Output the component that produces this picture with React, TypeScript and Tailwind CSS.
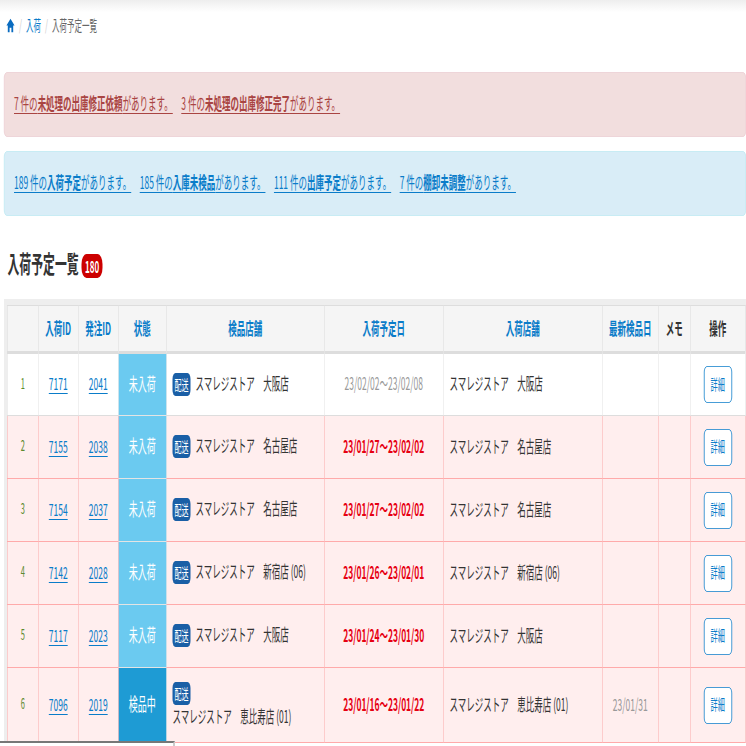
const font = { fontFamily: '"Noto Sans CJK JP", "Liberation Sans", sans-serif' };

const Badge = () => (
  <span className="inline-block rounded-[6px] bg-[#1a5fa6] px-[4px] py-[3px] text-[14px] leading-[17px] text-white">配送</span>
);

type Row = {
  n: number; id: string; po: string; status: string; insp: string; date: string; recv: string; last?: string; wrap?: boolean; late: boolean;
};

const rows: Row[] = [
  { n: 1, id: "7171", po: "2041", status: "未入荷", insp: "スマレジストア　大阪店", date: "23/02/02～23/02/08", recv: "スマレジストア　大阪店", late: false },
  { n: 2, id: "7155", po: "2038", status: "未入荷", insp: "スマレジストア　名古屋店", date: "23/01/27～23/02/02", recv: "スマレジストア　名古屋店", late: true },
  { n: 3, id: "7154", po: "2037", status: "未入荷", insp: "スマレジストア　名古屋店", date: "23/01/27～23/02/02", recv: "スマレジストア　名古屋店", late: true },
  { n: 4, id: "7142", po: "2028", status: "未入荷", insp: "スマレジストア　新宿店 (06)", date: "23/01/26～23/02/01", recv: "スマレジストア　新宿店 (06)", late: true },
  { n: 5, id: "7117", po: "2023", status: "未入荷", insp: "スマレジストア　大阪店", date: "23/01/24～23/01/30", recv: "スマレジストア　大阪店", late: true },
  { n: 6, id: "7096", po: "2019", status: "検品中", insp: "スマレジストア　恵比寿店 (01)", date: "23/01/16～23/01/22", recv: "スマレジストア　恵比寿店 (01)", last: "23/01/31", wrap: true, late: true },
];

const Alert = ({ tone, items }: { tone: "red" | "blue"; items: [string, string, string][] }) => (
  <div className={tone === "red"
    ? "flex h-[65px] items-center rounded-[6px] border border-[#ebccd1] bg-[#f2dede] px-[19px] pb-[3px] text-[#a94442]"
    : "flex h-[65px] items-center rounded-[6px] border border-[#bce8f1] bg-[#d9edf7] px-[19px] pb-[3px] text-[#0a7cc9]"}>
    <div className="flex gap-[17px] text-[17px] leading-[20px]">
      {items.map(([a, b, c]) => (
        <a key={b} className="underline underline-offset-[3px]">{a}<b>{b}</b>{c}</a>
      ))}
    </div>
  </div>
);

const Th = ({ children, dark }: { children?: string; dark?: boolean }) => (
  <th className={dark
    ? "border border-b-[3px] border-[#dddddd] bg-[#f5f5f5] pb-[2px] text-center text-[17px] font-bold text-[#333333]"
    : "border border-b-[3px] border-[#dddddd] bg-[#f5f5f5] pb-[2px] text-center text-[17px] font-bold text-[#0a7cc9]"}>{children}</th>
);

const Tr = ({ r }: { r: Row }) => {
  const c = r.late ? "border border-[#ffaaaa] align-middle" : "border border-[#e4e4e4] border-b-[#dddddd] align-middle";
  return (
    <tr className={r.late ? (r.wrap ? "h-[75px] bg-[#ffeeee]" : "h-[63px] bg-[#ffeeee]") : "h-[63px] bg-white"}>
      <td className={`${c} pb-[3px] text-center text-[15px] text-[#5c8a2e]`}>{r.n}</td>
      <td className={`${c} pb-[3px] text-center text-[#0a7cc9] underline underline-offset-[3px]`}>{r.id}</td>
      <td className={`${c} pb-[3px] text-center text-[#0a7cc9] underline underline-offset-[3px]`}>{r.po}</td>
      <td className={r.status === "未入荷"
        ? "border border-[#e4e4e4] bg-[#6bcaf0] pb-[3px] text-center text-[18px] text-white"
        : "border border-[#e4e4e4] bg-[#1e9bd4] pb-[3px] text-center text-[18px] text-white"}>{r.status}</td>
      <td className={`${c} px-[12px] pb-[1px] text-[#333333]`}>
        {r.wrap ? (
          <div className="flex flex-col items-start"><Badge /><span className="leading-[22px]">{r.insp}</span></div>
        ) : (
          <div className="flex items-center gap-[10px]"><Badge /><span className="pb-[3px]">{r.insp}</span></div>
        )}
      </td>
      <td className={r.late ? `${c} pb-[3px] text-center font-bold tracking-[-0.1px] text-[#e60012]` : `${c} pb-[3px] text-center text-[#999999]`}>{r.date}</td>
      <td className={`${c} px-[12px] pb-[3px] text-[#333333]`}>{r.recv}</td>
      <td className={`${c} pb-[3px] text-center text-[#999999]`}>{r.last}</td>
      <td className={c}></td>
      <td className={`${c} text-center`}>
        <button className="h-[37px] w-[56px] rounded-[6px] border border-[#0a7cc9] bg-white pb-[2px] text-[14.4px] text-[#0a7cc9]">詳細</button>
      </td>
    </tr>
  );
};

export default function App() {
  return (
    <div className="relative h-[746px] w-[746px] overflow-hidden bg-white" style={font}>
      <div className="w-[1492px] origin-top-left scale-x-[0.5] text-[17px] text-[#333333]">
        <div className="h-[12px] bg-gradient-to-b from-[#eeeeee] to-white" />
        <div className="flex h-[30px] items-center gap-[8px] pb-[3px] pl-[12px] text-[15px] text-[#666666]">
          <svg viewBox="0 0 20 20" preserveAspectRatio="none" className="h-[15px] w-[18px] fill-[#0a6cc0]">
            <path d="M10 1 1 10h3v9h4v-6h4v6h4v-9h3z" />
          </svg>
          <span className="text-[#cccccc]">/</span>
          <span className="text-[#0a7cc9]">入荷</span>
          <span className="text-[#cccccc]">/</span>
          <span>入荷予定一覧</span>
        </div>
        <div className="ml-[8px] mt-[30px] flex flex-col gap-[14px]">
          <Alert tone="red" items={[
            ["7 件の", "未処理の出庫修正依頼", "があります。"],
            ["3 件の", "未処理の出庫修正完了", "があります。"],
          ]} />
          <Alert tone="blue" items={[
            ["189 件の", "入荷予定", "があります。"],
            ["185 件の", "入庫未検品", "があります。"],
            ["111 件の", "出庫予定", "があります。"],
            ["7 件の", "棚卸未調整", "があります。"],
          ]} />
        </div>
        <div className="mt-[33px] flex items-center gap-[6px] pl-[15px]">
          <h2 className="pb-[2px] text-[23.7px] font-bold leading-[26px] text-[#333333]">入荷予定一覧</h2>
          <span className="mt-[5px] rounded-[10px] bg-[#cc0000] px-[7px] text-[16px] font-bold leading-[24px] text-white">180</span>
        </div>
        <div className="ml-[8px] mt-[21px] bg-[#eeeeee] pl-[6px] pt-[6px]">
          <table className="w-[1476px] table-fixed border-collapse">
            <colgroup>
              <col className="w-[62px]" />
              <col className="w-[80px]" />
              <col className="w-[80px]" />
              <col className="w-[96px]" />
              <col className="w-[316px]" />
              <col className="w-[238px]" />
              <col className="w-[318px]" />
              <col className="w-[112px]" />
              <col className="w-[64px]" />
              <col className="w-[110px]" />
            </colgroup>
            <thead>
              <tr className="h-[47px]">
                <Th />
                <Th>入荷ID</Th>
                <Th>発注ID</Th>
                <Th>状態</Th>
                <Th>検品店舗</Th>
                <Th>入荷予定日</Th>
                <Th>入荷店舗</Th>
                <Th>最新検品日</Th>
                <Th dark>メモ</Th>
                <Th dark>操作</Th>
              </tr>
            </thead>
            <tbody>
              {rows.map((r) => <Tr key={r.n} r={r} />)}
            </tbody>
          </table>
        </div>
      </div>
      <div className="absolute left-0 top-[741px] h-[20px] w-[175px] border-r-2 border-t-2 border-r-[#cccccc] border-t-[#777777] bg-white" />
    </div>
  );
}
